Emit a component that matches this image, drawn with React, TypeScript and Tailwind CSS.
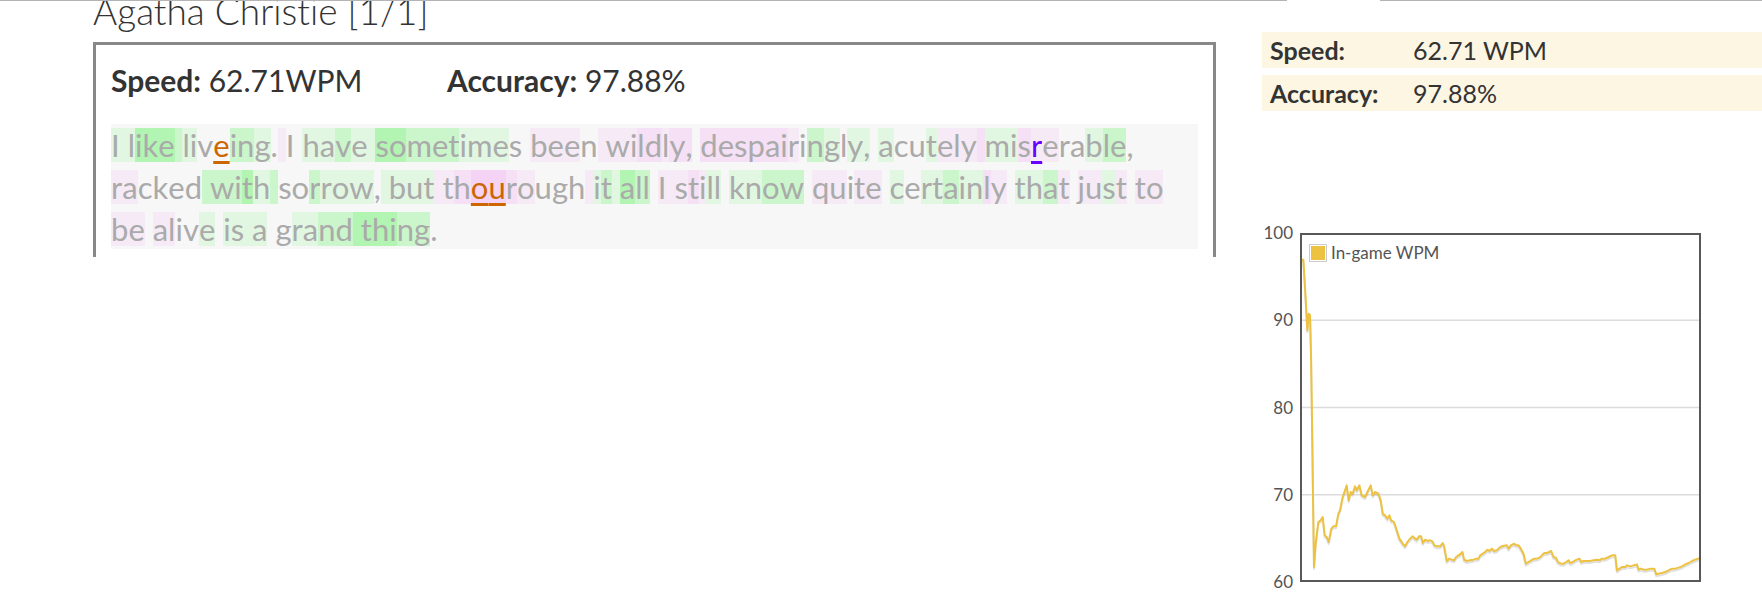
import React from 'react';

const heat: Record<string, string> = {
  '0': '',
  a: 'bg-[#e2f7e2]',
  b: 'bg-[#cbf6cb]',
  c: 'bg-[#b2f4b2]',
  p: 'bg-[#f6eaf6]',
  q: 'bg-[#f5e0f5]',
  r: 'bg-[#f5d3f5]',
};

// one heat code per character, plus the mistyped characters
const lines = [
  {
    text: 'I like liveing. I have sometimes been wildly, despairingly, acutely misrerable,',
    codes: 'aaacccbaa00bba0p00aabaaccbbbaaa00ppp0pppqqpqq0qqqqqqp0ba0aa0a00apppqaaqpp00abb0',
    errors: { 10: 'text-[#cc6600] decoration-[#cc6600]', 71: 'text-[#6a00ff] decoration-[#6a00ff]' } as Record<number, string>,
  },
  {
    text: 'racked with sorrow, but thourough it all I still know quite certainly that just to',
    codes: 'pp0000bbbcab00baaa0aaaappqrrqp000pabacbb0pppqpaa0aabb0pp0pp0a0aabaaqp0aabp0ppap0pp',
    errors: { 26: 'text-[#cc6600] decoration-[#cc6600]', 27: 'text-[#cc6600] decoration-[#cc6600]' } as Record<number, string>,
  },
  {
    text: 'be alive is a grand thing.',
    codes: 'pp0pp00a0aaaa00aabbccccbb0',
    errors: {} as Record<number, string>,
  },
];

const wpm: [number, number][] = [
  [152, 118], [160, 118], [165, 200], [172, 330], [176, 280], [180, 285], [183, 400], [186, 600],
  [190, 900], [192, 1040], [197, 970], [205, 905], [212, 900], [218, 890], [224, 945], [230, 950],
  [236, 965], [244, 925], [250, 918], [258, 918], [265, 880], [270, 870], [278, 830], [285, 810],
  [290, 795], [296, 840], [302, 815], [308, 820], [315, 798], [320, 810], [328, 795], [335, 825],
  [345, 830], [352, 815], [362, 795], [368, 825], [375, 815], [385, 820], [392, 840], [398, 880],
  [405, 885], [412, 895], [418, 885], [423, 900], [432, 905], [440, 930], [448, 955], [458, 970],
  [465, 978], [472, 965], [480, 955], [488, 948], [495, 955], [500, 958], [507, 948], [513, 948],
  [518, 968], [525, 958], [533, 962], [540, 960], [547, 963], [553, 975], [560, 978], [570, 978],
  [578, 968], [582, 978], [590, 1022], [597, 1015], [605, 1018], [612, 1020], [618, 1010], [625, 1005],
  [632, 1000], [637, 995], [642, 1018], [650, 1022], [660, 1020], [670, 1018], [678, 1015], [685, 1015],
  [690, 1005], [698, 1000], [705, 995], [712, 988], [718, 992], [725, 985], [732, 992], [740, 990],
  [748, 982], [755, 978], [762, 976], [770, 975], [775, 985], [782, 975], [792, 970], [798, 975],
  [805, 975], [812, 985], [820, 1000], [827, 1030], [835, 1025], [843, 1020], [852, 1015], [860, 1015],
  [868, 1012], [875, 1005], [882, 998], [890, 998], [897, 995], [903, 992], [910, 1010], [917, 1012],
  [923, 1025], [932, 1030], [940, 1030], [948, 1025], [955, 1020], [960, 1028], [968, 1025], [975, 1020],
  [980, 1018], [988, 1015], [993, 1025], [1000, 1022], [1010, 1022], [1020, 1022], [1030, 1020], [1040, 1018],
  [1048, 1020], [1055, 1015], [1065, 1015], [1075, 1010], [1085, 1005], [1095, 1005], [1100, 1050], [1108, 1045],
  [1115, 1040], [1125, 1040], [1130, 1035], [1140, 1038], [1150, 1035], [1160, 1032], [1165, 1048], [1172, 1045],
  [1180, 1048], [1190, 1048], [1200, 1045], [1212, 1045], [1218, 1062], [1225, 1060], [1235, 1058], [1245, 1055],
  [1255, 1050], [1265, 1045], [1275, 1045], [1285, 1042], [1295, 1038], [1305, 1032], [1315, 1028], [1325, 1022],
  [1335, 1018], [1350, 1013],
];

function TypedLine({ text, codes, errors }: { text: string; codes: string; errors: Record<number, string> }) {
  return (
    <div className="whitespace-pre">
      {text.split('').map((ch, i) => (
        <span
          key={i}
          className={`inline-block h-[34px] leading-[34px] ${heat[codes[i]] ?? ''} ${errors[i] ? `underline decoration-[3px] underline-offset-[4px] ${errors[i]}` : ''}`}
        >
          {ch}
        </span>
      ))}
    </div>
  );
}

function WpmChart() {
  const pts = wpm.map(([x, y]) => `${x},${y}`).join(' ');
  return (
    <div className="flex text-[#545454] text-[17px]">
      <div className="w-[31px] h-[367px] flex flex-col justify-between items-end leading-[18px]">
        <span>100</span>
        <span>90</span>
        <span>80</span>
        <span>70</span>
        <span>60</span>
      </div>
      <div className="relative ml-[7px] mt-[9px] w-[401px] h-[349px]">
        <svg width="401" height="349" viewBox="150 38 1202 1047" preserveAspectRatio="none">
          {[299.75, 561.5, 823.25].map((y) => (
            <line key={y} x1="150" x2="1352" y1={y} y2={y} stroke="#dcdcdc" strokeWidth="4" />
          ))}
          <polyline points={pts} fill="none" stroke="rgba(0,0,0,0.12)" strokeWidth="6" transform="translate(0 6)" strokeLinejoin="round" />
          <polyline points={pts} fill="none" stroke="#edc240" strokeWidth="6" strokeLinejoin="round" />
          <rect x="153" y="41" width="1196" height="1041" fill="none" stroke="#585858" strokeWidth="6" />
        </svg>
        <div className="absolute left-[9px] top-[11px] flex items-center gap-[4px]">
          <div className="border border-[#cccccc] p-px">
            <div className="w-[14px] h-[14px] bg-[#edc240]" />
          </div>
          <span className="leading-[18px]">In-game WPM</span>
        </div>
      </div>
    </div>
  );
}

export default function App() {
  return (
    <div className="w-[1762px] h-[601px] overflow-hidden bg-white font-['Lato',sans-serif] text-[#333333] [font-variant-ligatures:none]">
      <div className="flex h-px">
        <div className="w-[1287px] bg-[#b4b4b4]" />
        <div className="w-[93px]" />
        <div className="flex-1 bg-[#b4b4b4]" />
      </div>
      <div className="flex">
        <div className="ml-[93px] w-[1123px] shrink-0">
          <div className="h-[41px] overflow-hidden">
            <h1 className="-mt-[8px] text-[37px] leading-[36px] font-light">Agatha Christie [1/1]</h1>
          </div>
          <div className="h-[215px] border-t-[3px] border-x-[3px] border-[#888888] px-[15px]">
            <div className="mt-[14px] mb-[23px] flex text-[30px] leading-[42px]">
              <div className="w-[336px]">
                <span className="font-bold">Speed:</span> 62.71WPM
              </div>
              <div>
                <span className="font-bold">Accuracy:</span> 97.88%
              </div>
            </div>
            <div className="bg-[#f7f7f7] text-[31px] leading-[42px] text-[#aaaaaa] h-[125px]">
              {lines.map((l, i) => (
                <TypedLine key={i} text={l.text} codes={l.codes} errors={l.errors} />
              ))}
            </div>
          </div>
        </div>
        <div className="ml-[46px] flex-1">
          <div className="mt-[31px] flex flex-col gap-[7px] text-[25px] leading-[36px]">
            <div className="flex bg-[#fdf6e3] pl-[8px]">
              <span className="w-[143px] font-bold">Speed:</span>
              <span>62.71 WPM</span>
            </div>
            <div className="flex bg-[#fdf6e3] pl-[8px]">
              <span className="w-[143px] font-bold">Accuracy:</span>
              <span>97.88%</span>
            </div>
          </div>
          <div className="mt-[113px]">
            <WpmChart />
          </div>
        </div>
      </div>
    </div>
  );
}
